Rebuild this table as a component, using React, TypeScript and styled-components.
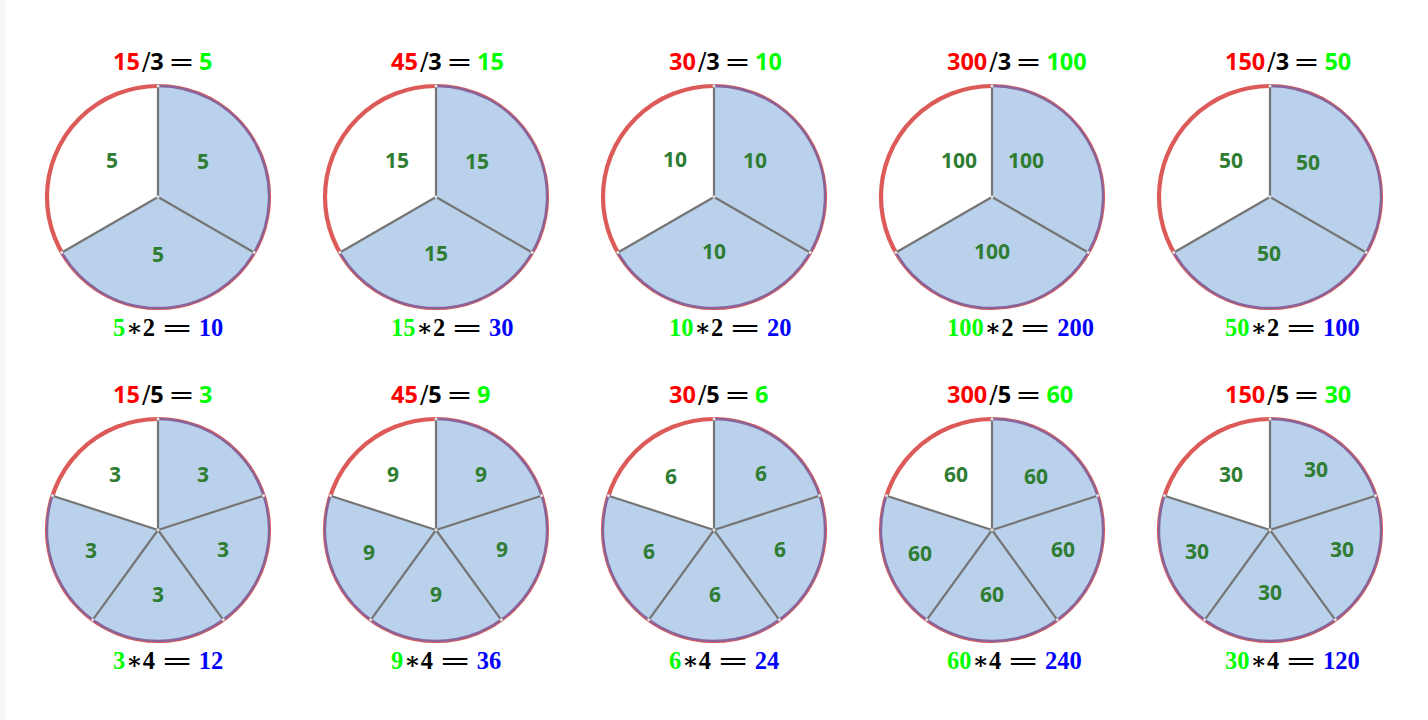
import React from 'react';
import styled, { createGlobalStyle } from 'styled-components';

const GlobalStyle = createGlobalStyle`
    html, body {
        margin: 0;
        padding: 0;
        background: #ffffff;
    }
`;

const Page = styled.div`
    display: grid;
    grid-template-columns: repeat(5, 278px);
    grid-auto-rows: 297px;
    align-content: start;
    row-gap: 36px;
    width: 1428px;
    height: 720px;
    box-sizing: border-box;
    padding: 46px 0 0 14px;
    border-left: 5px solid #f7f7f7;
`;

const Cell = styled.div`
    display: flex;
    flex-direction: column;
`;

const Equation = styled.div<{ $indent: number }>`
    height: 30px;
    line-height: 30px;
    padding-left: ${p => p.$indent}px;
    white-space: nowrap;
    color: #000;
`;

const SansNum = styled.span<{ $color?: string }>`
    font-family: "Open Sans", sans-serif;
    font-weight: 700;
    font-size: 23.5px;
    color: ${p => p.$color ?? '#000'};
`;

const SerifNum = styled.span<{ $color?: string }>`
    font-family: "Liberation Serif", serif;
    font-weight: 700;
    font-size: 24.5px;
    color: ${p => p.$color ?? '#000'};
`;

const Slash = styled.span`
    font-family: "DejaVu Serif", serif;
    font-size: 25px;
    margin: 0 0 0 2px;
`;

const Star = styled.span`
    font-family: "DejaVu Serif", serif;
    font-weight: 700;
    font-size: 24px;
    margin: 0 0 0 1px;
`;

const Equals = styled.span<{ $w: number }>`
    display: inline-block;
    width: ${p => p.$w}px;
    margin: 0 ${p => p.$w * 0.34}px;
    text-align: center;
    font-family: "DejaVu Sans", sans-serif;
    font-size: 24px;
    transform: scaleX(${p => p.$w / 16});
`;

const ChartSvg = styled.svg`
    display: block;
    width: 230px;
    height: 230px;
    margin: 6px 0 1px 24px;
    overflow: visible;
`;

const SliceLabel = styled.text`
    font-family: "Open Sans", sans-serif;
    font-weight: 700;
    font-size: 21px;
    fill: #2e7d32;
`;

type Offset = [number, number];

interface ChartData {
    total: number
    parts: number
    factor: number
    labels: Offset[]
}

const charts: ChartData[] = [
    { total: 15, parts: 3, factor: 2, labels: [[45, -36], [0, 57], [-46, -37]] },
    { total: 45, parts: 3, factor: 2, labels: [[41, -36], [0, 56], [-39, -37]] },
    { total: 30, parts: 3, factor: 2, labels: [[41, -37], [0, 54], [-39, -38]] },
    { total: 300, parts: 3, factor: 2, labels: [[34, -37], [0, 54], [-33, -37]] },
    { total: 150, parts: 3, factor: 2, labels: [[38, -35], [-1, 56], [-39, -37]] },
    { total: 15, parts: 5, factor: 4, labels: [[45, -56], [65, 19], [0, 64], [-67, 20], [-43, -56]] },
    { total: 45, parts: 5, factor: 4, labels: [[45, -56], [66, 19], [0, 64], [-67, 22], [-43, -56]] },
    { total: 30, parts: 5, factor: 4, labels: [[47, -57], [66, 19], [1, 64], [-65, 21], [-43, -54]] },
    { total: 300, parts: 5, factor: 4, labels: [[44, -54], [71, 19], [0, 64], [-72, 23], [-36, -56]] },
    { total: 150, parts: 5, factor: 4, labels: [[46, -61], [72, 19], [0, 62], [-73, 21], [-39, -56]] },
];

const C = 115;
const R = 111;

const point = (deg: number, r = R): [number, number] => {
    const a = (deg * Math.PI) / 180;
    return [C + r * Math.cos(a), C + r * Math.sin(a)];
};

function PieChart(props: { data: ChartData }): React.JSX.Element {
    const { parts, total, labels } = props.data;
    const value = total / parts;
    const step = 360 / parts;
    const angles = [...Array(parts + 1)].map((_, i) => -90 + i * step);

    const sectorPath = (from: number, to: number) => {
        const [x1, y1] = point(from);
        const [x2, y2] = point(to);
        return `M ${C} ${C} L ${x1} ${y1} A ${R} ${R} 0 0 1 ${x2} ${y2} Z`;
    };

    // outline of the shaded part, where blue lies over the red ring
    const filledArc = () => {
        const [x1, y1] = point(angles[0]);
        const [x2, y2] = point(angles[parts - 1]);
        const large = (parts - 1) * step > 180 ? 1 : 0;
        return `M ${x1} ${y1} A ${R} ${R} 0 ${large} 1 ${x2} ${y2}`;
    };

    return <ChartSvg viewBox='0 0 230 230'>
        <circle cx={C} cy={C} r={R} fill='#ffffff' stroke='#dc5a58' strokeWidth={4.2} />
        {angles.slice(0, parts - 1).map((a, i) =>
            <path key={`sector-${i}`} d={sectorPath(a, angles[i + 1])} fill='#bad1eb' />
        )}
        <path d={filledArc()} fill='none' stroke='#87649a' strokeWidth={2.4} />
        {angles.slice(0, parts).map((a, i) => {
            const [x, y] = point(a);
            return <line key={`radius-${i}`} x1={C} y1={C} x2={x} y2={y} stroke='#757575' strokeWidth={2.2} />;
        })}
        {angles.slice(0, parts).map((a, i) => {
            const [x, y] = point(a);
            return <circle key={`dot-${i}`} cx={x} cy={y} r={1.4} fill='#f4f4f4' stroke='#b0b0b0' strokeWidth={0.5} />;
        })}
        <circle cx={C} cy={C} r={1.4} fill='#f4f4f4' stroke='#b0b0b0' strokeWidth={0.5} />
        {labels.map(([dx, dy], i) =>
            <SliceLabel key={`label-${i}`} x={C + dx} y={C + dy} dy='0.36em' textAnchor='middle'>
                {value}
            </SliceLabel>
        )}
    </ChartSvg>;
}

export default function App(): React.JSX.Element {
    return <>
        <GlobalStyle />
        <Page>
            {charts.map((c, i) => {
                const value = c.total / c.parts;
                return <Cell key={`chart-${i}`}>
                    <Equation $indent={94}>
                        <SansNum $color='#ff0000'>{c.total}</SansNum>
                        <Slash>/</Slash>
                        <SansNum>{c.parts}</SansNum>
                        <Equals $w={21}>=</Equals>
                        <SansNum $color='#00ff00'>{value}</SansNum>
                    </Equation>
                    <PieChart data={c} />
                    <Equation $indent={94}>
                        <SerifNum $color='#00ff00'>{value}</SerifNum>
                        <Star>∗</Star>
                        <SerifNum>{c.factor}</SerifNum>
                        <Equals $w={26}>=</Equals>
                        <SerifNum $color='#0000ff'>{value * c.factor}</SerifNum>
                    </Equation>
                </Cell>;
            })}
        </Page>
    </>;
}
